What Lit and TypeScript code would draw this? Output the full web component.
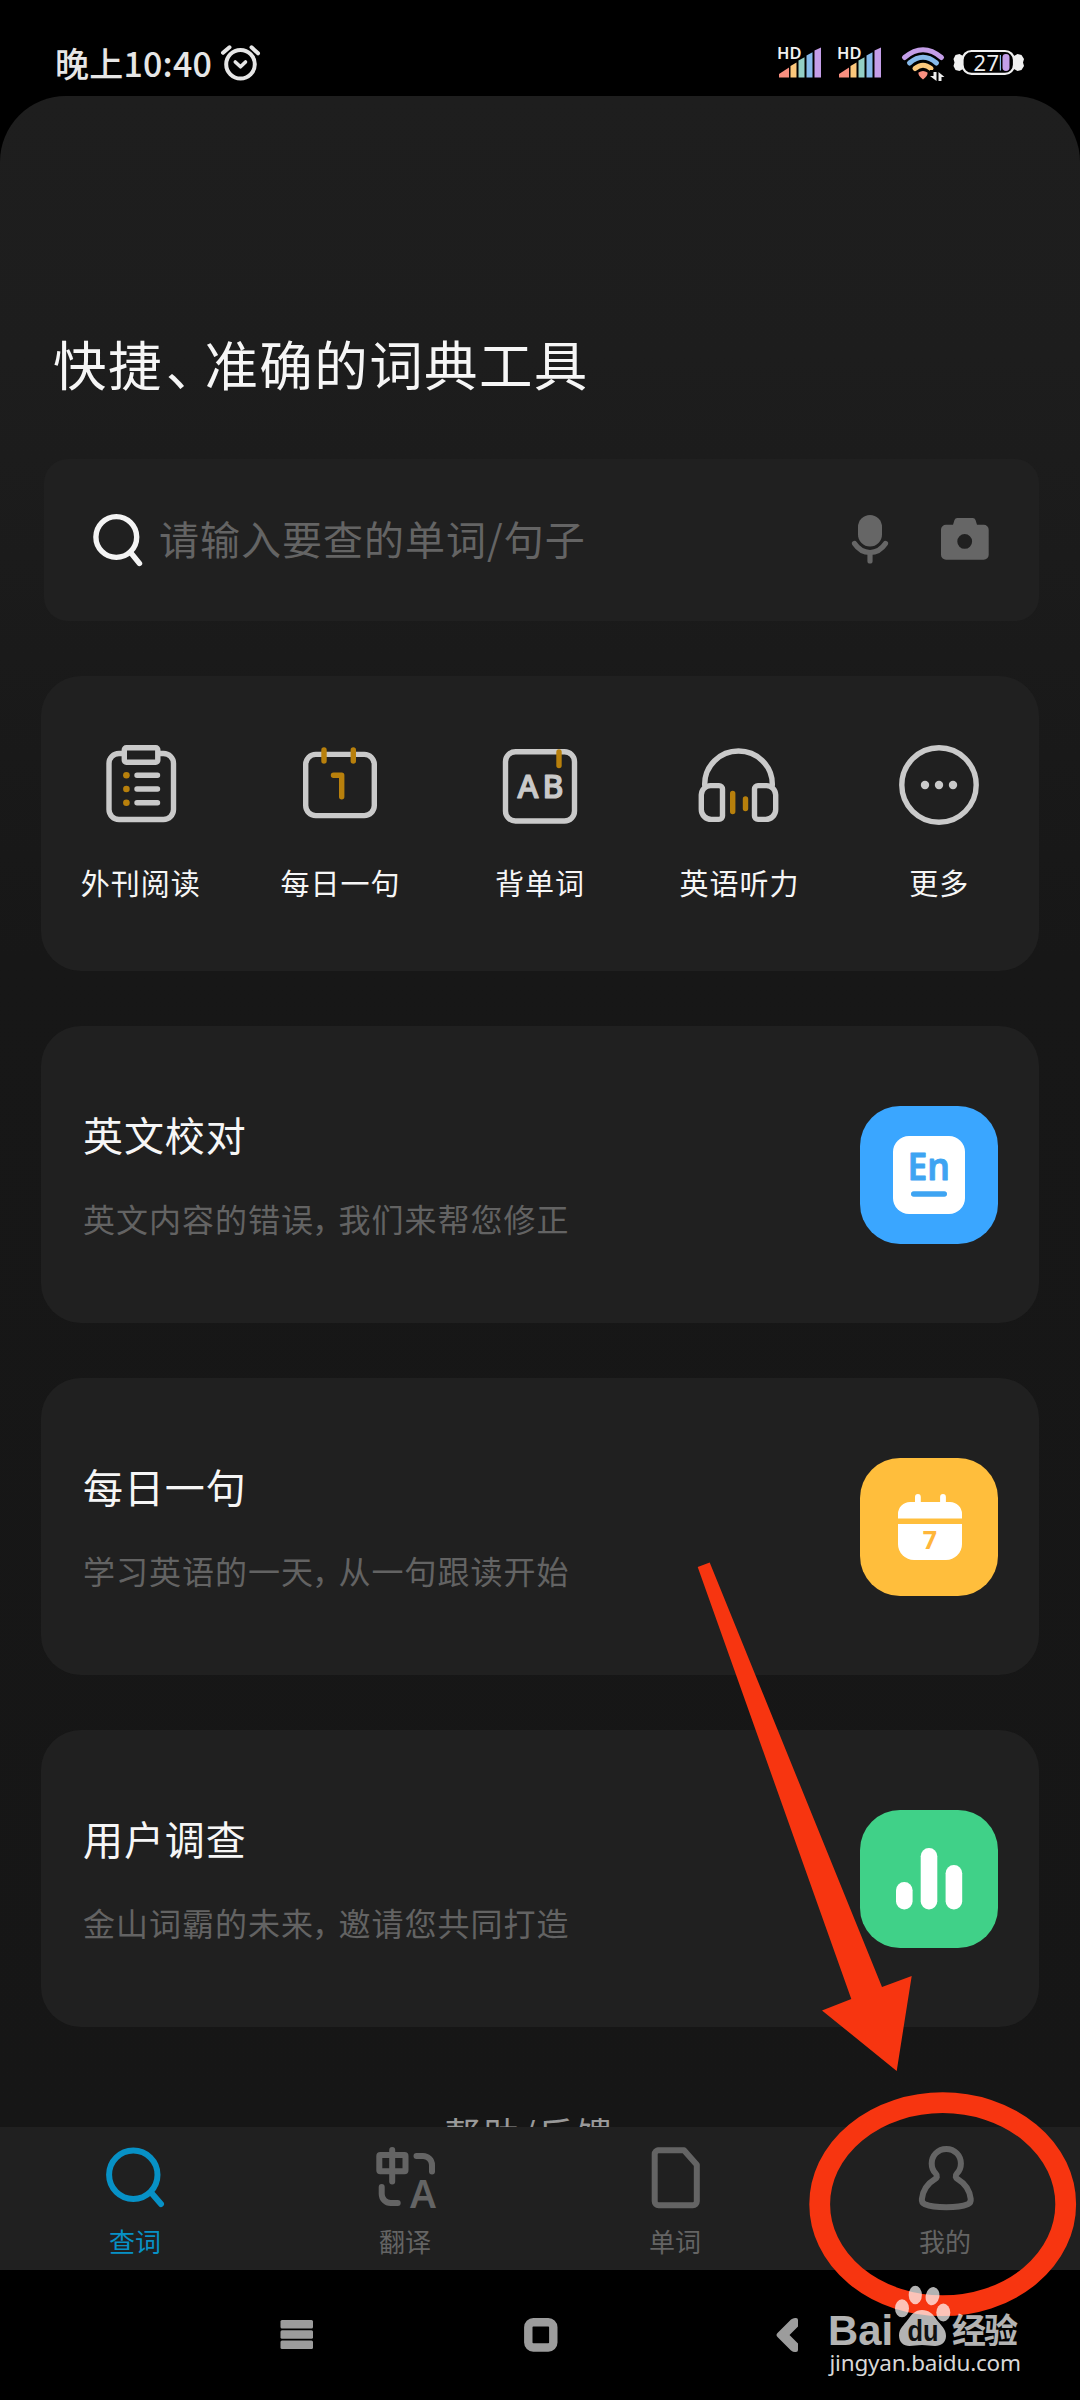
import { LitElement, html, svg, css, type SVGTemplateResult } from "lit";
import { customElement } from "lit/decorators.js";
import { classMap } from "lit/directives/class-map.js";

const HD_SIGNAL = svg`
  <text class="hd" x="777" y="59" textLength="24.500" lengthAdjust="spacingAndGlyphs">HD</text>
  <path fill="#f88f80" d="M779 77.5V74l10-6.5v10z"/>
  <path fill="#fbc87c" d="M790.5 77.5V66l6-3.500v15z"/>
  <path fill="#93cfc5" d="M798.500 77.5V60.500l6-3.200v20.200z"/>
  <path fill="#86b9ea" d="M806.500 77.500V55.500l6-3.200v25.200z"/>
  <path fill="#c49ee8" d="M814.500 77.500V50.500l6.500-3v30z"/>`;

const QUICK: { label: string; box: string; art: SVGTemplateResult }[] = [
  {
    label: "外刊阅读",
    box: "101 745 80 80",
    art: svg`
      <g class="line">
        <path d="M123 753.500h-4a10 10 0 0 0-10 10v46a10 10 0 0 0 10 10h44.500a10 10 0 0 0 10-10v-46a10 10 0 0 0-10-10h-4"/>
        <rect x="124.300" y="747.700" width="33.500" height="14.500" rx="2"/>
        <path d="M137 775.300h20.500M137 789h20.500M137 802.700h20.500"/>
      </g>
      <g class="gold-fill"><circle cx="126.400" cy="775.300" r="3.300"/><circle cx="126.400" cy="789" r="3.300"/><circle cx="126.400" cy="802.700" r="3.300"/></g>`,
  },
  {
    label: "每日一句",
    box: "300 745 80 80",
    art: svg`
      <rect class="line" x="305.700" y="754.400" width="68.600" height="61.200" rx="10"/>
      <path class="gold" d="M324 750v11M353.300 750v11M333.500 775.300h8.200v21.500"/>`,
  },
  {
    label: "背单词",
    box: "500 745 80 80",
    art: svg`
      <rect class="line" x="505.500" y="751.700" width="69" height="69.300" rx="10"/>
      <path class="gold" d="M559 752v13.500"/>
      <text class="ab" x="517.500" y="798">A</text>
      <text class="ab" x="542.500" y="798">B</text>`,
  },
  {
    label: "英语听力",
    box: "700.500 745 80 80",
    art: svg`
      <g class="line">
        <path d="M705.200 785v-1a33.800 33 0 0 1 67.600 0v1"/>
        <path d="M711 785.600h8.500a3.500 3.500 0 0 1 3.500 3.500v26.800a3.500 3.500 0 0 1-3.500 3.500h-7.700a10 10 0 0 1-10-10v-14.600a9.500 9.500 0 0 1 9.200-9.200z"/>
        <path d="M767 785.600h-8.500a3.500 3.500 0 0 0-3.500 3.500v26.800a3.500 3.500 0 0 0 3.500 3.500h7.700a10 10 0 0 0 10-10v-14.600a9.500 9.500 0 0 0-9.200-9.200z"/>
      </g>
      <path class="gold" d="M733.200 793.500v18M746 799v9.500"/>`,
  },
  {
    label: "更多",
    box: "899 745 80 80",
    art: svg`
      <circle class="line" cx="939" cy="785" r="37.200"/>
      <g class="light-fill"><circle cx="925" cy="785" r="4.200"/><circle cx="939" cy="785" r="4.200"/><circle cx="953" cy="785" r="4.200"/></g>`,
  },
];

const FEATURES: { title: string; lead: string; rest: string; tone: string; art: SVGTemplateResult }[] = [
  {
    title: "英文校对",
    lead: "英文内容的错误",
    rest: "我们来帮您修正",
    tone: "blue",
    art: svg`
      <rect x="33" y="30" width="72" height="78" rx="16" fill="#fff"/>
      <text class="en" x="47.500" y="73.500" textLength="42.500" lengthAdjust="spacingAndGlyphs">En</text>
      <rect x="51" y="85.300" width="36" height="5.400" rx="2.700" fill="#3ea4f2"/>`,
  },
  {
    title: "每日一句",
    lead: "学习英语的一天",
    rest: "从一句跟读开始",
    tone: "amber",
    art: svg`
      <path fill="#fff" d="M38 60.400V56a12 12 0 0 1 12-12h5v-5a2.900 2.900 0 0 1 5.800 0v5h19.300v-5a2.900 2.900 0 0 1 5.800 0v5H90a12 12 0 0 1 12 12v4.400z"/>
      <path fill="#fff" d="M38 66h64v20a16 16 0 0 1-16 16H54a16 16 0 0 1-16-16z"/>
      <text class="seven" x="62.800" y="90.500">7</text>`,
  },
  {
    title: "用户调查",
    lead: "金山词霸的未来",
    rest: "邀请您共同打造",
    tone: "green",
    art: svg`
      <g fill="#fff">
        <rect x="36" y="72" width="16.600" height="27.500" rx="8.200"/>
        <rect x="60.700" y="38" width="16.600" height="61.500" rx="8.200"/>
        <rect x="85.600" y="55" width="16.600" height="44.500" rx="8.200"/>
      </g>`,
  },
];

const TABS: { label: string; box: string; active?: boolean; art: SVGTemplateResult }[] = [
  {
    label: "查词",
    box: "102 2145 66 66",
    active: true,
    art: svg`<circle cx="133.300" cy="2174.700" r="24.200"/><path d="M151.500 2193l9.500 11"/>`,
  },
  {
    label: "翻译",
    box: "372 2145 66 66",
    art: svg`
      <rect x="379.300" y="2155" width="26.200" height="16.300" rx="1"/>
      <path d="M392.200 2150v31.500M416.500 2156h6.500a9 9 0 0 1 9 9v6.500M381.700 2187v7a9 9 0 0 0 9 9h7"/>
      <text class="tab-a" x="410" y="2207.500" textLength="26" lengthAdjust="spacingAndGlyphs">A</text>`,
  },
  {
    label: "单词",
    box: "642 2145 66 66",
    art: svg`<path d="M658 2150.300h26l12.800 14.500v36.500a4 4 0 0 1-4 4H658.700a4 4 0 0 1-4-4v-47a4 4 0 0 1 4-4z"/>`,
  },
  {
    label: "我的",
    box: "912 2145 66 66",
    art: svg`<path d="M946.300 2149c-8.500 0-14.600 6.500-14.600 14.500 0 4.500 1.500 7.500 4 10 2.200 2.300 1.300 4.300-1 5.800-7 4.200-11.500 9.500-12.800 19.500-.4 3 .6 4.300 3 5.400 5.400 2.200 12.500 3 21.400 3s16-.8 21.400-3c2.400-1.100 3.400-2.400 3-5.400-1.300-10-5.800-15.300-12.800-19.500-2.300-1.500-3.200-3.500-1-5.800 2.500-2.500 4-5.500 4-10 0-8-6.100-14.500-14.600-14.500z"/>`,
  },
];

@customElement("app-root")
export class AppRoot extends LitElement {
  static styles = css`
    :host {
      display: block;
      position: relative;
      width: 1080px;
      height: 2400px;
      overflow: hidden;
      background: #000;
      color: #f6f6f6;
      font-family: "Noto Sans CJK SC", "Noto Sans", sans-serif;
    }
    .page { display: flex; flex-direction: column; height: 2400px; }
    svg { display: block; flex: none; overflow: visible; }

    .status { display: flex; align-items: flex-start; height: 96px; box-sizing: border-box; padding: 42px 53px 0 55px; color: #e6e6e6; }
    .time { margin-top: 1px; font-size: 34px; line-height: 40px; font-weight: 500; letter-spacing: .2px; width: 165px; white-space: nowrap; }
    .status svg { margin-top: 2px; }
    .system { display: flex; margin-left: auto; }
    .hd { font: 600 16.500px "Noto Sans", sans-serif; fill: #f0f0f0; }
    .level { font: 400 22px "Noto Sans", sans-serif; fill: #eee; }

    .screen {
      flex: none; display: flex; flex-direction: column; align-items: stretch;
      height: 2031px; box-sizing: border-box; padding: 237px 41px 0; overflow: hidden;
      border-radius: 66px 66px 0 0;
      background: linear-gradient(#1e1e1e 0, #1d1d1d 260px, #171717 860px, #161616 100%);
    }
    h1 { margin: 0 0 66px 12px; font-size: 53.500px; line-height: 60px; font-weight: 400; letter-spacing: 1.400px; white-space: nowrap; }
    .tight { font-feature-settings: "halt"; margin: 0 10.500px 0 3px; }

    .search { flex: none; display: flex; align-items: center; height: 162px; margin: 0 0 55px 3px; padding: 0 49px 0 48px; box-sizing: border-box; border-radius: 24px; background: #202020; }
    .hint { flex: 1; margin-left: 15px; padding-bottom: 4px; font-size: 40px; line-height: 48px; letter-spacing: 1px; color: #646464; white-space: nowrap; }
    .camera { margin-left: 50px; }

    .quick { flex: none; display: grid; grid-template-columns: repeat(5, 1fr); height: 295px; margin-bottom: 55px; padding-top: 69px; box-sizing: border-box; border-radius: 40px; background: #202020; }
    .shortcut { display: flex; flex-direction: column; align-items: center; gap: 39px; font-size: 29px; line-height: 36px; letter-spacing: 1px; }
    .line { fill: none; stroke: #cacaca; stroke-width: 5.400; stroke-linecap: round; stroke-linejoin: round; }
    .gold { fill: none; stroke: #b8800c; stroke-width: 5.400; stroke-linecap: round; stroke-linejoin: round; }
    .gold-fill { fill: #b8800c; }
    .light-fill { fill: #cacaca; }
    .ab { font: 500 32px "Noto Sans", sans-serif; fill: #cacaca; stroke: #cacaca; stroke-width: 1.200; stroke-linejoin: round; }

    .features { flex: none; display: flex; flex-direction: column; gap: 55px; }
    .card { display: flex; align-items: center; justify-content: space-between; height: 297px; padding: 0 41px 0 42px; box-sizing: border-box; border-radius: 40px; background: #202020; }
    h2 { margin: -2px 0 40px; font-size: 40px; line-height: 48px; font-weight: 400; letter-spacing: .9px; }
    p { margin: 0; font-size: 32px; line-height: 40px; letter-spacing: 1px; color: #636363; white-space: nowrap; }
    .comma { font-feature-settings: "halt"; margin: 0 9.500px 0 -2px; }
    .badge { width: 138px; height: 138px; border-radius: 40px; }
    .blue { background: #3aa6ff; }
    .amber { background: #ffbe3c; }
    .green { background: #40d188; }
    .en { font: 600 37px "Noto Sans", sans-serif; fill: #3ea4f2; stroke: #3ea4f2; stroke-width: .8; stroke-linejoin: round; }
    .seven { font: 700 25px "Noto Sans", sans-serif; fill: #ffb63a; }
    .help { flex: none; margin: 87px 21px 0 0; text-align: center; font-size: 36.500px; line-height: 40px; letter-spacing: 2px; color: #999; }

    .tabs { flex: none; display: grid; grid-template-columns: repeat(4, 1fr); height: 143px; padding-top: 18px; box-sizing: border-box; background: #202020; }
    .tab { display: flex; flex-direction: column; align-items: center; gap: 14px; font-size: 26px; line-height: 32px; color: #646464; }
    .tab svg { fill: none; stroke: currentColor; stroke-width: 6; stroke-linecap: round; stroke-linejoin: round; }
    .tab.active { color: #0791c6; }
    .tab .tab-a { font: 600 40px "Noto Sans", sans-serif; fill: currentColor; stroke: none; }

    .keys { display: flex; justify-content: center; gap: 204px; padding-top: 45px; }

    .marks { position: absolute; left: 0; top: 0; pointer-events: none; }
    .brand { font: 700 42px "Liberation Sans", sans-serif; }
    .brand-du { font: 700 29px "Liberation Sans", sans-serif; fill: #111; }
    .brand-cn { font: 700 34px "Noto Sans CJK SC", sans-serif; }
    .site { font: 400 22.500px "Noto Sans", sans-serif; fill: #d8d8d8; }
  `;

  private status() {
    return html`
      <header class="status">
        <span class="time">晚上10:40</span>
        <svg width="42" height="40" viewBox="220 44 42 40" fill="none" stroke="#e6e6e6" stroke-width="4" stroke-linecap="round" stroke-linejoin="round">
          <circle cx="240.500" cy="64.300" r="14.300"/>
          <path d="M223 52.800l6.500-5.500M251.500 47.300l6.500 6"/>
          <path stroke-width="3.600" d="M235.300 62l5.200 4.800 5-4.800"/>
        </svg>
        <div class="system">
          <svg width="60" height="40" viewBox="776 44 60 40">${HD_SIGNAL}</svg>
          <svg width="60" height="40" viewBox="776 44 60 40">${HD_SIGNAL}</svg>
          <svg width="56" height="40" viewBox="896 44 56 40" fill="none" stroke-width="5" stroke-linecap="round">
            <path stroke="#c49ee8" d="M904.500 57.500q18.500-15.500 37 0"/>
            <path stroke="#86b9ea" d="M909.500 63q13.500-11.500 27 0"/>
            <path stroke="#fbc87c" d="M915 68.500q8-6.500 16 0"/>
            <path fill="#f88f80" d="M918.500 72.500q4.500-3 9 0 .8 3-4.500 7-5.300-4-4.500-7z"/>
            <path stroke="#000" stroke-width="4" stroke-linecap="butt" d="M930 72h16"/>
            <path fill="#eee" d="M933.500 72h3v9l-6.500-5h3.500zM938.500 81v-9l6 5h-3v4z"/>
          </svg>
          <svg width="75" height="40" viewBox="952 44 75 40">
            <path fill="#f0f0f0" d="M963 56l-3.500-2-4 1-2 4 1 3.500-1 3.500 2 4 4 1 3.500-2zM1014 56l3.500-2 4 1 2.500 4-1 3.500 1 3.500-2.500 4-4 1-3.500-2z"/>
            <rect x="962.500" y="51" width="51.500" height="22.800" rx="9" fill="#000" stroke="#f0f0f0" stroke-width="2.200"/>
            <rect x="999.800" y="55" width="1.200" height="15.500" fill="#86b9ea"/>
            <rect x="1002.500" y="54" width="7" height="17" rx="3.400" fill="#c49ee8"/>
            <text class="level" x="973.500" y="70.700" textLength="25.500">27</text>
          </svg>
        </div>
      </header>`;
  }

  private search() {
    return html`
      <div class="search">
        <svg width="52" height="56" viewBox="92 512 52 56" fill="none" stroke="#f4f4f4" stroke-width="5.400" stroke-linecap="round">
          <circle cx="116.300" cy="537" r="20.400"/>
          <path d="M131 553l8.500 10.500"/>
        </svg>
        <span class="hint">请输入要查的单词/句子</span>
        <svg width="40" height="52" viewBox="850 514 40 52" fill="#666">
          <rect x="858" y="515" width="24" height="31.500" rx="12"/>
          <path d="M854.500 543.500q6 9 15.500 9t15.500-9M870 553v8" fill="none" stroke="#666" stroke-width="5.200" stroke-linecap="round"/>
        </svg>
        <svg class="camera" width="50" height="52" viewBox="940 514 50 52">
          <path fill="#666" fill-rule="evenodd" d="M946 524.700h7l1.500-4.700q.7-2 2.700-2h15.600q2 0 2.700 2l1.500 4.700h6.700a5 5 0 0 1 5 5v25a5 5 0 0 1-5 5H946a5 5 0 0 1-5-5v-25a5 5 0 0 1 5-5zM964.700 534a7.400 7.400 0 1 0 0 14.800 7.400 7.400 0 0 0 0-14.800z"/>
        </svg>
      </div>`;
  }

  private marks() {
    return html`
      <svg class="marks" width="1080" height="2400" viewBox="0 0 1080 2400">
        <path fill="#f73510" d="M697.700 1567l12-4.500L882 1987l29.700-11-15 95-74.700-60.600 29.300-11.400z"/>
        <ellipse cx="942.700" cy="2204.200" rx="123" ry="101.500" fill="none" stroke="#f73510" stroke-width="20.800"/>
        <g fill="#fff" opacity=".7">
          <ellipse cx="902" cy="2308.300" rx="7" ry="9"/>
          <ellipse cx="915.300" cy="2295" rx="6.600" ry="9.300"/>
          <ellipse cx="932.500" cy="2296.200" rx="6.800" ry="9.200" transform="rotate(12 932.500 2296.200)"/>
          <ellipse cx="943.300" cy="2312.500" rx="7" ry="9"/>
          <path d="M922 2310c7 0 11 4 14.500 9.500 4 5.500 9.500 9 9.500 16.500 0 6.500-5 10-11 10-5 0-8-1-13-1s-8 1-12.500 1c-6 0-10.500-4-10.500-10.500 0-7 5-10.500 9-16 3.500-5 7-9.500 14-9.500z"/>
          <text class="brand" x="828" y="2344.500" textLength="65" lengthAdjust="spacingAndGlyphs">Bai</text>
          <text class="brand-cn" x="952" y="2343" textLength="66">经验</text>
        </g>
        <text class="brand-du" x="907.500" y="2340.500" textLength="31" lengthAdjust="spacingAndGlyphs">du</text>
        <text class="site" x="829.500" y="2370.500" textLength="191.500">jingyan.baidu.com</text>
      </svg>`;
  }

  render() {
    return html`
      <div class="page">
        ${this.status()}
        <main class="screen">
          <h1>快捷<span class="tight">、</span>准确的词典工具</h1>
          ${this.search()}
          <section class="quick">
            ${QUICK.map((q) => html`
              <div class="shortcut">
                <svg width="80" height="80" viewBox=${q.box}>${q.art}</svg>
                <span>${q.label}</span>
              </div>`)}
          </section>
          <section class="features">
            ${FEATURES.map((f) => html`
              <article class="card">
                <div>
                  <h2>${f.title}</h2>
                  <p>${f.lead}<span class="comma">，</span>${f.rest}</p>
                </div>
                <svg class=${"badge " + f.tone} viewBox="0 0 138 138">${f.art}</svg>
              </article>`)}
          </section>
          <div class="help">帮助/反馈</div>
        </main>
        <nav class="tabs">
          ${TABS.map((t) => html`
            <div class=${classMap({ tab: true, active: !!t.active })}>
              <svg width="66" height="66" viewBox=${t.box}>${t.art}</svg>
              <span>${t.label}</span>
            </div>`)}
        </nav>
        <footer class="keys">
          <svg width="40" height="40" viewBox="276 2315 40 40" fill="#9c9c9c">
            <rect x="280.500" y="2320" width="32.500" height="8.600" rx="1.500"/>
            <rect x="280.500" y="2330.200" width="32.500" height="8.600" rx="1.500"/>
            <rect x="280.500" y="2340.400" width="32.500" height="8.600" rx="1.500"/>
          </svg>
          <svg width="40" height="40" viewBox="520 2315 40 40">
            <rect x="528.300" y="2322.200" width="25" height="25.300" rx="5" fill="none" stroke="#9c9c9c" stroke-width="8.400"/>
          </svg>
          <svg width="40" height="40" viewBox="764 2315 40 40">
            <path d="M777.500 2333l13.500-13.500q2-1.500 4-1.500h1q2 0 2 2v6.500L789.500 2335l8.500 8.500v6.500q0 2-2 2h-1q-2 0-4-1.500L777.500 2337q-2-2 0-4z" fill="#9c9c9c"/>
          </svg>
        </footer>
      </div>
      ${this.marks()}`;
  }
}
